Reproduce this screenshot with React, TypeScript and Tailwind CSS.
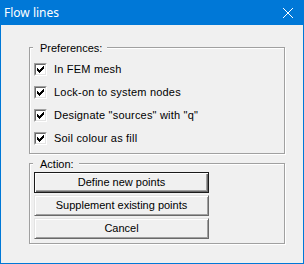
import React from "react";

const CheckMark = () => (
  <svg width="7" height="7" viewBox="0 0 7 7" shapeRendering="crispEdges" fill="#000">
    <rect x="6" y="0" width="1" height="1" />
    <rect x="5" y="1" width="2" height="1" />
    <rect x="0" y="2" width="1" height="1" />
    <rect x="4" y="2" width="3" height="1" />
    <rect x="0" y="3" width="2" height="1" />
    <rect x="3" y="3" width="3" height="1" />
    <rect x="0" y="4" width="5" height="1" />
    <rect x="1" y="5" width="3" height="1" />
    <rect x="2" y="6" width="1" height="1" />
  </svg>
);

const CheckRow = ({ label }: { label: string }) => (
  <div className="flex items-center gap-[7px] h-[13px]">
    <div className="w-[13px] h-[13px] border border-t-[#a0a0a0] border-l-[#a0a0a0] border-b-white border-r-white">
      <div className="w-[11px] h-[11px] border border-t-[#696969] border-l-[#696969] border-b-[#e3e3e3] border-r-[#e3e3e3] bg-white flex items-center justify-center">
        <CheckMark />
      </div>
    </div>
    <span className="leading-[13px] whitespace-nowrap tracking-[0.2px]">{label}</span>
  </div>
);

const Group = ({
  title,
  className,
  children,
}: {
  title: string;
  className: string;
  children: React.ReactNode;
}) => (
  <div
    className={
      "relative w-[256px] border border-[#a0a0a0] shadow-[inset_1px_1px_0_#ffffff,1px_1px_0_#ffffff] " +
      className
    }
  >
    <div className="absolute left-[3px] -top-[6px] pl-[7px] pr-[5px] leading-[13px] bg-[#f0f0f0] whitespace-nowrap">
      {title}
    </div>
    {children}
  </div>
);

export default function App() {
  return (
    <div className="w-[304px] h-[264px] bg-[#f0f0f0] border-x border-b border-[#0078d7] flex flex-col font-['Liberation_Sans',Arial,sans-serif] text-[11px] text-black">
      <div className="h-[25px] shrink-0 bg-[#0078d7] flex items-center justify-between pl-[3px] pr-[10px]">
        <span className="text-white text-[12px] font-['Noto_Sans','Open_Sans',sans-serif]">
          Flow lines
        </span>
        <svg width="10" height="10" viewBox="0 0 10 10" stroke="#ffffff" strokeWidth="1">
          <line x1="0" y1="0" x2="10" y2="10" />
          <line x1="10" y1="0" x2="0" y2="10" />
        </svg>
      </div>

      <div className="ml-[28px] mt-[22px] flex flex-col">
        <Group title="Preferences:" className="h-[107px] pt-[15px] pl-[4px]">
          <div className="flex flex-col gap-[10px]">
            <CheckRow label="In FEM mesh" />
            <CheckRow label="Lock-on to system nodes" />
            <CheckRow label={'Designate "sources" with "q"'} />
            <CheckRow label="Soil colour as fill" />
          </div>
        </Group>

        <Group title="Action:" className="mt-[9px] h-[81px] pt-[8px] pl-[4px]">
          <div className="flex flex-col gap-[2px]">
            <button className="w-[175px] h-[21px] bg-[#f0f0f0] border border-[#1a1a1a] shadow-[inset_1px_1px_0_#ffffff,inset_-1px_-1px_0_#696969,inset_-2px_-2px_0_#a0a0a0] leading-[13px] text-center">
              Define new points
            </button>
            <button className="w-[175px] h-[21px] bg-[#f0f0f0] border border-t-[#e3e3e3] border-l-[#e3e3e3] border-b-[#696969] border-r-[#696969] shadow-[inset_1px_1px_0_#ffffff,inset_-1px_-1px_0_#a0a0a0] leading-[13px] text-center">
              Supplement existing points
            </button>
            <button className="w-[175px] h-[21px] bg-[#f0f0f0] border border-t-[#e3e3e3] border-l-[#e3e3e3] border-b-[#696969] border-r-[#696969] shadow-[inset_1px_1px_0_#ffffff,inset_-1px_-1px_0_#a0a0a0] leading-[13px] text-center">
              Cancel
            </button>
          </div>
        </Group>
      </div>
    </div>
  );
}
